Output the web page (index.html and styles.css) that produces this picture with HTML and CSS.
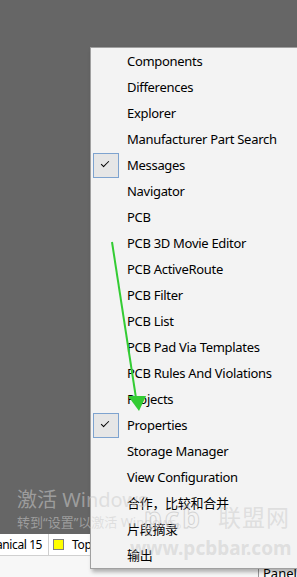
FILE: index.html
```html
<!DOCTYPE html>
<html lang="en">
<head>
  <meta charset="UTF-8">
  <title>Panels menu</title>
  <link rel="stylesheet" href="styles.css">
</head>
<body>
  <div class="screen">
    <div class="desk"></div>
    <div class="tabbar">
      <div class="tab first">anical 15</div>
      <div class="tab"><span class="swatch"></span>Top</div>
    </div>
    <div class="statusbar">
      <span class="panels">Panels</span>
    </div>

    <div class="activate">
      <p class="act-big">激活 Windows</p>
      <p class="act-small">转到“设置”以激活 Windows。</p>
    </div>

    <ul class="menu">
      <li class="item">Components</li>
      <li class="item">Differences</li>
      <li class="item">Explorer</li>
      <li class="item">Manufacturer Part Search</li>
      <li class="item checked">Messages</li>
      <li class="item">Navigator</li>
      <li class="item">PCB</li>
      <li class="item">PCB 3D Movie Editor</li>
      <li class="item">PCB ActiveRoute</li>
      <li class="item">PCB Filter</li>
      <li class="item">PCB List</li>
      <li class="item">PCB Pad Via Templates</li>
      <li class="item">PCB Rules And Violations</li>
      <li class="item">Projects</li>
      <li class="item checked">Properties</li>
      <li class="item">Storage Manager</li>
      <li class="item">View Configuration</li>
      <li class="item">合作，比较和合并</li>
      <li class="item">片段摘录</li>
      <li class="item">输出</li>
    </ul>

    <div class="mark">
      <div class="mark-top"><span class="mark-logo">pcb</span><span class="mark-cn">联盟网</span></div>
      <div class="mark-url">www.pcbbar.com</div>
    </div>

    <svg class="arrow" width="297" height="577" viewBox="0 0 297 577">
      <line x1="112" y1="242" x2="136" y2="398" stroke="#33cc33" stroke-width="2"/>
      <polygon points="128,396 146,396 139,411" fill="#33cc33"/>
    </svg>
  </div>
</body>
</html>
```

FILE: styles.css
```css
*{
  margin: 0;
  padding: 0;
  box-sizing: border-box;
}
body{
  font-family: "Noto Sans", "Noto Sans CJK SC", sans-serif;
  background: #666666;
  overflow: hidden;
}
.screen{
  position: relative;
  width: 297px;
  height: 577px;
  display: flex;
  flex-direction: column;
  overflow: hidden;
}
.desk{
  height: 534px;
  background: #666666;
}
.tabbar{
  height: 22px;
  background: #ffffff;
  border-bottom: 1px solid #d0d0d0;
  display: flex;
  font-size: 12px;
  line-height: 21px;
  color: #000;
  letter-spacing: -0.4px;
}
.tab{
  display: flex;
  align-items: center;
  padding: 0 6px 0 0;
  border-right: 1px solid #cfcfcf;
}
.first{
  margin-left: -4px;
}
.tab + .tab{
  padding-left: 4px;
}
.swatch{
  display: inline-block;
  width: 11px;
  height: 11px;
  background: #ffff00;
  border: 1px solid #808080;
  margin-right: 8px;
}
.statusbar{
  flex: 1;
  background: #f7f7f7;
  position: relative;
}
.panels{
  position: absolute;
  left: 258px;
  top: 9px;
  padding-left: 4px;
  border-left: 1px solid #999;
  font-size: 13px;
  line-height: 16px;
}
.activate{
  position: absolute;
  left: 17px;
  top: 486px;
  color: rgba(205, 205, 205, 0.55);
  z-index: 3;
  pointer-events: none;
  white-space: nowrap;
}
.act-big{
  font-size: 20px;
  line-height: 27px;
}
.act-small{
  font-size: 13px;
  line-height: 18px;
}
.menu{
  position: absolute;
  left: 90px;
  top: 47px;
  width: 230px;
  list-style: none;
  background: #f3f3f3;
  border: 1px solid #a0a0a0;
  box-shadow: 2px 3px 4px rgba(0, 0, 0, 0.3);
  z-index: 2;
}
.item{
  position: relative;
  height: 26px;
  padding-left: 36px;
  font-size: 13px;
  letter-spacing: -0.3px;
  line-height: 26px;
  color: #000;
  white-space: nowrap;
}
.checked::before{
  content: "";
  position: absolute;
  left: 2px;
  top: 1px;
  width: 24px;
  height: 23px;
  background: #e6e6e6;
  border: 1px solid #7ea3cf;
}
.checked::after{
  content: "";
  position: absolute;
  left: 10px;
  top: 9px;
  width: 7px;
  height: 3px;
  border-left: 1.5px solid #000;
  border-bottom: 1.5px solid #000;
  transform: rotate(-45deg);
}
.mark{
  position: absolute;
  left: 144px;
  top: 503px;
  z-index: 4;
  color: rgba(190, 190, 190, 0.4);
  pointer-events: none;
  white-space: nowrap;
}
.mark-top{
  display: flex;
  align-items: center;
}
.mark-logo{
  width: 74px;
  font-size: 28px;
  font-weight: 700;
  line-height: 28px;
  letter-spacing: 3px;
  color: transparent;
  -webkit-text-stroke: 1px rgba(190, 190, 190, 0.6);
}
.mark-cn{
  font-size: 23px;
  line-height: 28px;
  letter-spacing: 1px;
}
.mark-url{
  margin-left: -14px;
  margin-top: 5px;
  font-size: 19px;
  font-weight: 700;
  line-height: 24px;
}
.arrow{
  position: absolute;
  left: 0;
  top: 0;
  z-index: 5;
  pointer-events: none;
}
```
